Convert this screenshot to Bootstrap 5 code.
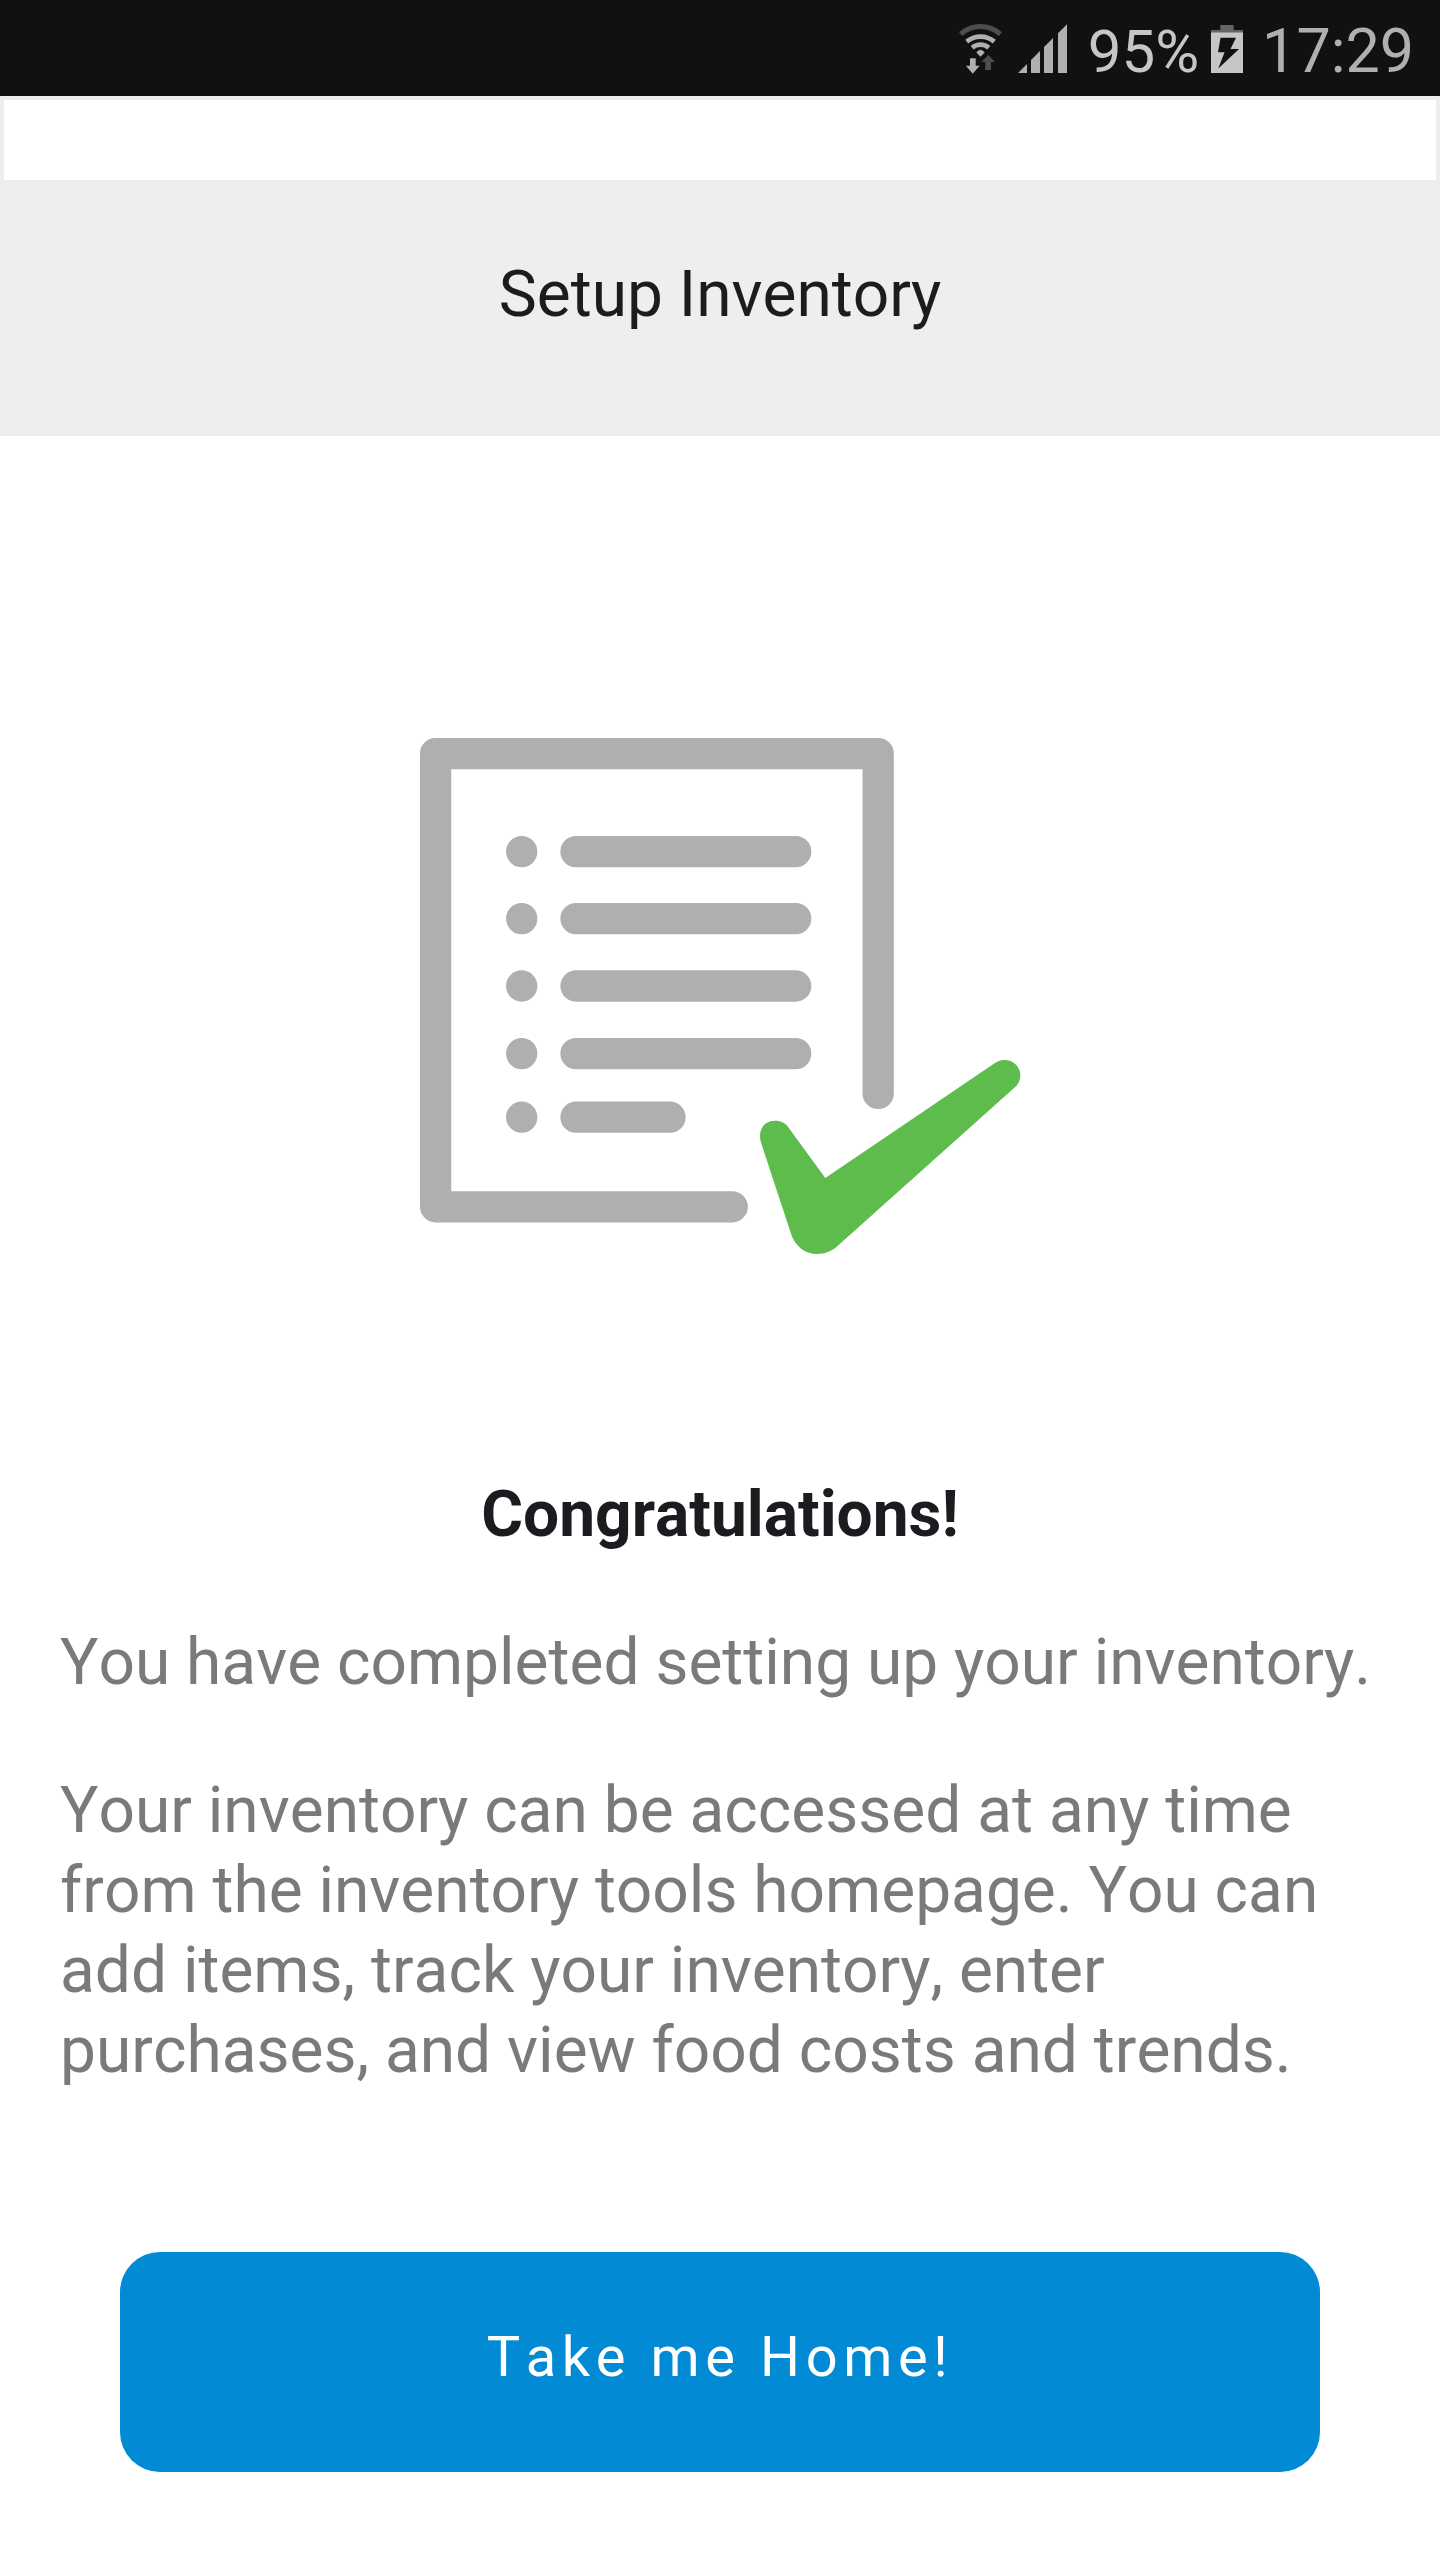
<!DOCTYPE html>
<html lang="en">
<head>
<meta charset="utf-8">
<meta name="viewport" content="width=device-width, initial-scale=1">
<title>Setup Inventory</title>
<link href="https://cdn.jsdelivr.net/npm/bootstrap@5.3.0/dist/css/bootstrap.min.css" rel="stylesheet">
<style>
  body { font-family: Roboto, "Liberation Sans", sans-serif; font-size: 64px; line-height: 80px; color: #1d1b20; }
  svg { display: block; flex: none; }
  .screen { width: 1440px; height: 2560px; font-kerning: none; }
  .status-bar { height: 96px; background: #111; color: #b0b0b0; padding-top: 11px; padding-right: 26px; }
  .status-icons { margin-top: -11px; }
  .charge { color: #c6c6c6; font-size: 60px; margin: 1px 12px 0 20.5px; }
  .clock { font-size: 61px; margin-left: 19px; font-kerning: normal; }
  .blank-field { height: 84px; border: 4px solid #eee; border-bottom: 0; }
  .title-bar { height: 256px; background: #eee; padding-top: 75px; }
  .illustration { padding-top: 302px; }
  .message { padding: 221px 60px 0; gap: 68px; }
  .message-body { color: #7a7a7a; }
  .home-btn { --bs-btn-color: #fff; --bs-btn-bg: #038ad4; --bs-btn-hover-bg: #027bbd; --bs-btn-hover-color: #fff;
    --bs-btn-border-width: 0; --bs-btn-border-radius: 40px; --bs-btn-font-size: 56px; --bs-btn-line-height: 70px;
    margin: 161px 120px 0; height: 220px; padding: 70px 0 80px; letter-spacing: 5.6px; font-kerning: none; }
</style>
</head>
<body>
<div class="screen d-flex flex-column bg-white overflow-hidden">
  <header class="status-bar d-flex justify-content-end text-nowrap">
    <svg class="status-icons" width="112" height="96" viewBox="955 0 112 96" aria-label="Wi-Fi and signal">
      <g fill="none" stroke="#b0b0b0" stroke-width="4.7">
        <path stroke="#4d4d4d" stroke-width="5" d="M960.7 34.2A29.5 29.5 0 0 1 1000.3 34.2"/>
        <path d="M966.7 41.6A21.4 21.4 0 0 1 994.3 41.6"/>
        <path d="M972.2 47.7A12.8 12.8 0 0 1 988.8 47.7"/>
      </g>
      <path fill="#b0b0b0" d="M976.3 52.4Q980.5 47.2 984.7 52.4L980.5 56.8ZM970 58.3h5.7v7.4h4L972.7 73.7L965.9 65.7H970Z"/>
      <path fill="#4d4d4d" d="M988.3 55L995.2 62H991v8h-5.7v-8H981.3Z"/>
      <path fill="#b0b0b0" d="M1018 73L1027 64V73ZM1031 60L1040 51V73H1031ZM1044 47L1053 38V73H1044ZM1058 33.3L1067 24.3V73H1058Z"/>
    </svg>
    <span class="charge">95%</span>
    <svg class="status-icons" width="32" height="96" viewBox="1211 0 32 96" aria-label="Battery charging">
      <path fill="#646464" d="M1220.3 25H1233.7V30H1243V33H1211V30H1220.3Z"/>
      <path fill="#c6c6c6" d="M1211 32.5H1243V73H1211Z"/>
      <path fill="#111" d="M1220.5 37.7H1236L1230.5 49H1239L1218.3 68.5L1224.6 52.3H1218Z"/>
    </svg>
    <span class="clock">17:29</span>
  </header>
  <div class="blank-field"></div>
  <div class="title-bar text-center">Setup Inventory</div>
  <main class="d-flex flex-column">
    <div class="illustration d-flex justify-content-center">
      <svg width="602" height="516" viewBox="419 738 602 516" aria-label="Completed checklist">
        <g fill="none" stroke="#afafaf" stroke-width="31.3" stroke-linecap="round" stroke-linejoin="round">
          <path d="M732.2 1206.8H435.6V753.6H878.2V1093.4"/>
          <path d="M576 851.6H795.7M576 918.6H795.7M576 986H795.7M576 1053.6H795.7M576 1117.2H670"/>
          <path d="M521.7 851.6h.01M521.7 918.6h.01M521.7 986h.01M521.7 1053.6h.01M521.7 1117.2h.01"/>
        </g>
        <path fill="#5dbc4b" d="M789 1128.2C785.5 1123 781 1120.8 775 1120.8C765 1120.8 760 1128 760 1136C760 1138 760.2 1140 760.8 1142L791.8 1236C795.8 1246 804.5 1254 817 1254C824.5 1254 831.5 1251.5 836.7 1246.8L1016.3 1086C1019 1083 1020.4 1079 1020.4 1075C1020.4 1066.5 1013 1060 1004.8 1060C1000.5 1060 997 1061.6 993.5 1064L825.3 1177.9Z"/>
      </svg>
    </div>
    <div class="message d-flex flex-column">
      <div class="fw-bold text-center">Congratulations!</div>
      <div class="message-body">You have completed setting up your inventory.</div>
      <div class="message-body">Your inventory can be accessed at any time<br>from the inventory tools homepage. You can<br>add items, track your inventory, enter<br>purchases, and view food costs and trends.</div>
    </div>
    <button type="button" class="btn home-btn">Take me Home!</button>
  </main>
</div>
<script src="https://cdn.jsdelivr.net/npm/bootstrap@5.3.0/dist/js/bootstrap.bundle.min.js"></script>
</body>
</html>
